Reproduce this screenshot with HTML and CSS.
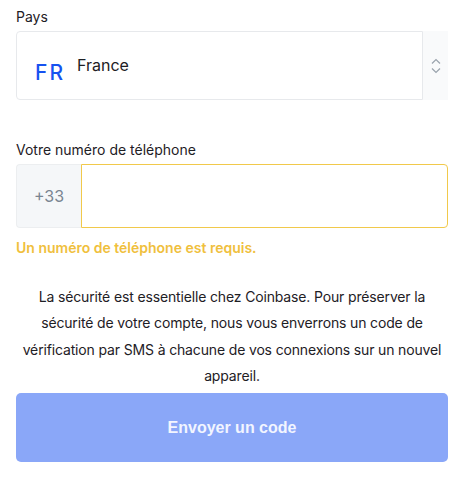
FILE: index.html
```html
<!DOCTYPE html>
<html lang="fr">
<head>
  <meta charset="UTF-8" />
  <meta name="viewport" content="width=device-width, initial-scale=1.0" />
  <title>Numéro de téléphone</title>
  <link rel="stylesheet" href="styles.css">
</head>
<body>
  <div class="form">
    <label class="field-label">Pays</label>
    <div class="select">
      <div class="select-box">
        <span class="flag">FR</span>
        <span class="country">France</span>
      </div>
      <div class="select-arrows">
        <svg width="12" height="18" viewBox="0 0 12 18" fill="none" stroke="#9aa3ad" stroke-width="1.2">
          <path d="M2 6.5 L6 2.5 L10 6.5" />
          <path d="M2 11.5 L6 15.5 L10 11.5" />
        </svg>
      </div>
    </div>

    <label class="field-label phone-label">Votre numéro de téléphone</label>
    <div class="phone">
      <div class="prefix">+33</div>
      <input type="tel" class="phone-input" />
    </div>
    <div class="error">Un numéro de téléphone est requis.</div>

    <p class="info">La sécurité est essentielle chez Coinbase. Pour préserver la sécurité de votre compte, nous vous enverrons un code de vérification par SMS à chacune de vos connexions sur un nouvel appareil.</p>

    <button class="submit">Envoyer un code</button>
  </div>
</body>
</html>
```

FILE: styles.css
```css
body {
  margin: 0;
  font-family: "Inter", "Liberation Sans", sans-serif;
  color: #1e2025;
  background: #ffffff;
}
.form {
  padding: 8px 15px 0 16px;
}
.field-label {
  display: block;
  font-size: 14px;
  line-height: 17px;
  margin-bottom: 6px;
}
.select {
  display: flex;
  height: 69px;
}
.select-box {
  flex: 1;
  display: flex;
  align-items: center;
  border: 1px solid #e7e9ec;
  border-radius: 4px 0 0 4px;
  padding-left: 18px;
}
.flag {
  color: #1652f0;
  font-size: 21px;
  letter-spacing: 2px;
  font-weight: 500;
  margin-top: 14px;
  margin-right: 12px;
}
.country {
  font-size: 16px;
  margin-bottom: 1px;
}
.select-arrows {
  width: 25px;
  background: #f9fafb;
  display: flex;
  align-items: center;
  justify-content: center;
}
.phone-label {
  margin-top: 41px;
}
.phone {
  display: flex;
  height: 64px;
}
.prefix {
  width: 64px;
  background: #f5f7f9;
  border: 1px solid #eceef0;
  border-right: none;
  border-radius: 4px 0 0 4px;
  display: flex;
  align-items: center;
  justify-content: center;
  color: #7a8591;
  font-size: 16px;
}
.phone-input {
  flex: 1;
  border: 1px solid #f1c94b;
  border-radius: 0 4px 4px 0;
  outline: none;
  margin: 0;
  padding: 0 12px;
  font-size: 16px;
}
.error {
  color: #f0c03d;
  font-weight: 600;
  font-size: 14px;
  margin-top: 11px;
}
.info {
  text-align: center;
  font-size: 14px;
  letter-spacing: -0.15px;
  line-height: 26.3px;
  margin: 28px 0 0;
}
.submit {
  display: block;
  width: 100%;
  height: 69px;
  margin-top: 4px;
  background: #8aa7f8;
  color: #f2f5ff;
  border: none;
  border-radius: 5px;
  font-family: "Liberation Sans", sans-serif;
  font-weight: bold;
  font-size: 16px;
}
```
